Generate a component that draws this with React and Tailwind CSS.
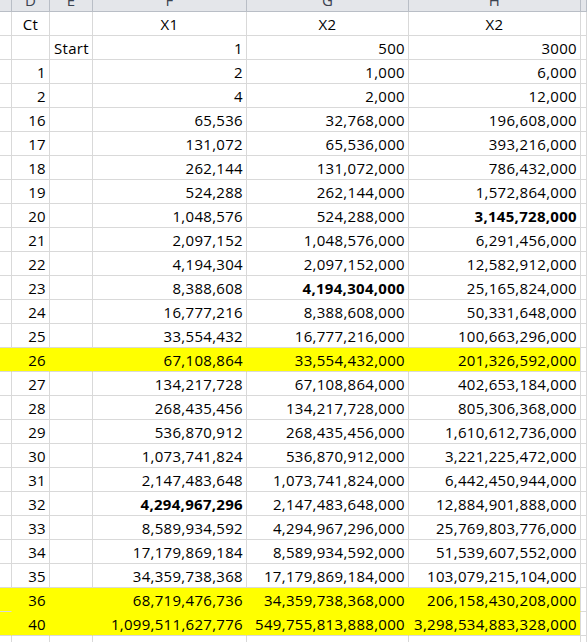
import React from "react";

const rows = [
  { d: "Ct", f: "X1", g: "X2", h: "X2", center: true },
  { e: "Start", f: "1", g: "500", h: "3000" },
  { d: "1", f: "2", g: "1,000", h: "6,000" },
  { d: "2", f: "4", g: "2,000", h: "12,000" },
  { d: "16", f: "65,536", g: "32,768,000", h: "196,608,000" },
  { d: "17", f: "131,072", g: "65,536,000", h: "393,216,000" },
  { d: "18", f: "262,144", g: "131,072,000", h: "786,432,000" },
  { d: "19", f: "524,288", g: "262,144,000", h: "1,572,864,000" },
  { d: "20", f: "1,048,576", g: "524,288,000", h: "3,145,728,000", bold: "h" },
  { d: "21", f: "2,097,152", g: "1,048,576,000", h: "6,291,456,000" },
  { d: "22", f: "4,194,304", g: "2,097,152,000", h: "12,582,912,000" },
  { d: "23", f: "8,388,608", g: "4,194,304,000", h: "25,165,824,000", bold: "g" },
  { d: "24", f: "16,777,216", g: "8,388,608,000", h: "50,331,648,000" },
  { d: "25", f: "33,554,432", g: "16,777,216,000", h: "100,663,296,000" },
  { d: "26", f: "67,108,864", g: "33,554,432,000", h: "201,326,592,000", hl: true },
  { d: "27", f: "134,217,728", g: "67,108,864,000", h: "402,653,184,000" },
  { d: "28", f: "268,435,456", g: "134,217,728,000", h: "805,306,368,000" },
  { d: "29", f: "536,870,912", g: "268,435,456,000", h: "1,610,612,736,000" },
  { d: "30", f: "1,073,741,824", g: "536,870,912,000", h: "3,221,225,472,000" },
  { d: "31", f: "2,147,483,648", g: "1,073,741,824,000", h: "6,442,450,944,000" },
  { d: "32", f: "4,294,967,296", g: "2,147,483,648,000", h: "12,884,901,888,000", bold: "f" },
  { d: "33", f: "8,589,934,592", g: "4,294,967,296,000", h: "25,769,803,776,000" },
  { d: "34", f: "17,179,869,184", g: "8,589,934,592,000", h: "51,539,607,552,000" },
  { d: "35", f: "34,359,738,368", g: "17,179,869,184,000", h: "103,079,215,104,000" },
  { d: "36", f: "68,719,476,736", g: "34,359,738,368,000", h: "206,158,430,208,000", hl: true, joinNext: true },
  { d: "40", f: "1,099,511,627,776", g: "549,755,813,888,000", h: "3,298,534,883,328,000", hl: true },
];

const headers = ["", "D", "E", "F", "G", "H", ""];

function Cell({ children, align, bold, hl, bottomHl, last }) {
  const justify =
    align === "center" ? "justify-center" : align === "left" ? "justify-start pl-[4px]" : "justify-end pr-[3px]";
  return (
    <div
      className={`flex items-end h-[24px] border-b border-r pb-[2px] overflow-visible whitespace-nowrap ${justify} ${
        hl ? "bg-[#ffff00]" : "bg-white"
      } ${hl && !last ? "border-r-[#ffff00]" : "border-r-[#d9d9d9]"} ${
        bottomHl ? "border-b-[#ffff00]" : "border-b-[#d9d9d9]"
      } ${bold ? "font-bold" : ""}`}
    >
      {children}
    </div>
  );
}

export default function App() {
  return (
    <div
      className="w-[587px] h-[642px] overflow-hidden bg-white text-black text-[15px] leading-[18px] tracking-[0.3px]"
      style={{ fontFamily: '"Open Sans", "Liberation Sans", sans-serif' }}
    >
      <div className="grid grid-cols-[12px_38px_43px_154px_162px_172px_1fr]">
        {headers.map((h, i) => (
          <div
            key={"h" + i}
            className="h-[12px] overflow-hidden flex justify-center bg-[#e4e6ea] border-b border-r border-[#b9bec6] text-[#3b4350]"
          >
            <span className="block -mt-[9px] leading-[18px]">{h}</span>
          </div>
        ))}

        {rows.map((r, i) => {
          const align = r.center ? "center" : "right";
          return (
            <React.Fragment key={i}>
              <Cell hl={r.hl} bottomHl={false} last={false}>
                {""}
              </Cell>
              <Cell align={align} hl={r.hl} bottomHl={r.joinNext}>
                {r.d}
              </Cell>
              <Cell align="left" hl={r.hl} bottomHl={r.joinNext}>
                {r.e}
              </Cell>
              <Cell align={align} hl={r.hl} bottomHl={r.joinNext} bold={r.bold === "f"}>
                {r.f}
              </Cell>
              <Cell align={align} hl={r.hl} bottomHl={r.joinNext} bold={r.bold === "g"}>
                {r.g}
              </Cell>
              <Cell align={align} hl={r.hl} bottomHl={r.joinNext} bold={r.bold === "h"} last>
                {r.h}
              </Cell>
              <Cell>{""}</Cell>
            </React.Fragment>
          );
        })}

        {headers.map((_, i) => (
          <div key={"t" + i} className="h-[10px] border-r border-[#d9d9d9]" />
        ))}
      </div>
    </div>
  );
}
